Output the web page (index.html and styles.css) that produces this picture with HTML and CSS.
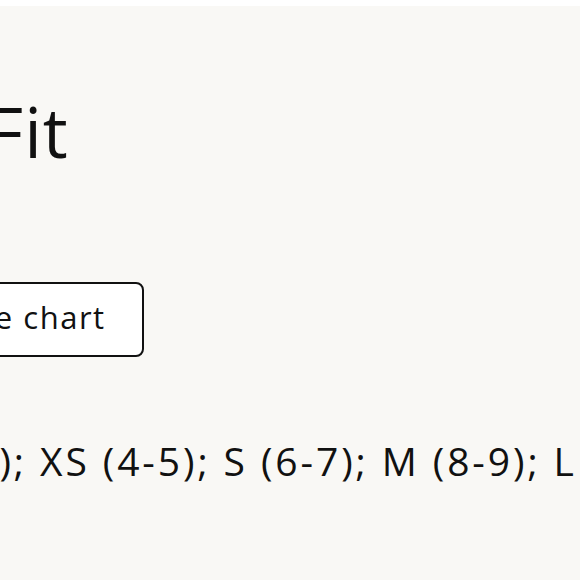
FILE: index.html
```html
<!DOCTYPE html>
<html lang="en">
<head>
<meta charset="utf-8">
<title>Size &amp; Fit</title>
<link rel="stylesheet" href="styles.css">
</head>
<body>
<section class="fit">
  <h2 class="fit-title">Fit</h2>
  <button class="chart-btn" type="button">Size chart</button>
  <p class="sizes">XXS (2-3); XS (4-5); S (6-7); M (8-9); L (10-11); XL (12-13)</p>
</section>
</body>
</html>
```

FILE: styles.css
```css
html, body {
  margin: 0;
  padding: 0;
  background: #ffffff;
  overflow: hidden;
  height: 100%;
}

.fit {
  margin-top: 6px;
  height: 574px;
  background: #f9f8f5;
  color: #111111;
  font-family: "Open Sans", "Noto Sans", sans-serif;
  padding-top: 82px;
  box-sizing: border-box;
  white-space: nowrap;
}

.fit-title {
  margin: 0 0 0 -13px;
  font-size: 70px;
  font-weight: 400;
  line-height: 86px;
  letter-spacing: 1px;
}

.chart-btn {
  display: block;
  margin: 108px 0 0 -87px;
  height: 75px;
  padding: 13px 36px 19px 36px;
  font-family: inherit;
  font-size: 31px;
  line-height: 38px;
  letter-spacing: 1.5px;
  color: #111111;
  background: #ffffff;
  border: 2px solid #111111;
  border-radius: 8px;
  box-sizing: border-box;
}

.sizes {
  margin: 80px 0 0 -169px;
  font-size: 39px;
  line-height: 48px;
  letter-spacing: 2.9px;
}
```
